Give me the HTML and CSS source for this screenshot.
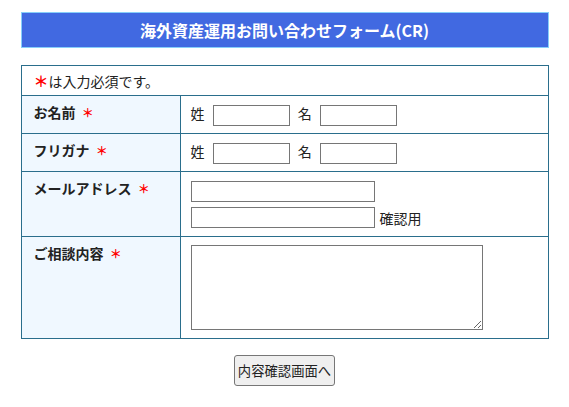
FILE: index.html
```
<!doctype html>
<html lang="ja">
<head>
  <meta charset="utf-8">
  <title>海外資産運用お問い合わせフォーム(CR)</title>
  <link rel="stylesheet" href="styles.css">
</head>
<body>
  <div class="wrap">
    <h1 class="formTitle">海外資産運用お問い合わせフォーム(CR)</h1>

    <table class="formTable">
      <tr>
        <td colspan="2" class="note"><span class="mark">＊</span>は入力必須です。</td>
      </tr>
      <tr>
        <th>お名前 <span class="req">＊</span></th>
        <td>姓 <input type="text" class="short"> 名 <input type="text" class="short"></td>
      </tr>
      <tr>
        <th>フリガナ <span class="req">＊</span></th>
        <td>姓 <input type="text" class="short"> 名 <input type="text" class="short"></td>
      </tr>
      <tr>
        <th>メールアドレス <span class="req">＊</span></th>
        <td class="mail">
          <div class="mailLine"><input type="text" class="long"></div>
          <div class="mailLine"><input type="text" class="long"> 確認用</div>
        </td>
      </tr>
      <tr>
        <th>ご相談内容 <span class="req">＊</span></th>
        <td class="msg"><textarea></textarea></td>
      </tr>
    </table>

    <div class="submitArea">
      <button type="button">内容確認画面へ</button>
    </div>
  </div>
</body>
</html>
```

FILE: styles.css
```
body{
  margin:0;
  font-family:"Noto Sans CJK JP", "Liberation Sans", sans-serif;
  font-size:14px;
  color:#222;
  background:#fff;
}
.wrap{
  width:528px;
  margin:0 auto;
  padding-top:12px;
}
.formTitle{
  margin:0;
  height:36px;
  box-sizing:border-box;
  line-height:34px;
  background:#4169e1;
  border:1px solid #87cefa;
  color:#fff;
  font-size:16px;
  font-weight:bold;
  text-align:center;
}
.formTable{
  width:100%;
  margin-top:17px;
  border-collapse:collapse;
  line-height:20px;
}
.formTable th,
.formTable td{
  border:1px solid #2a6e8c;
}
.formTable th{
  width:134px;
  padding:6px 12px;
  background:#f0f8ff;
  text-align:left;
  vertical-align:top;
  font-weight:bold;
}
.formTable td{
  height:23px;
  padding:7px 10px;
  vertical-align:middle;
}
.formTable td.note{
  height:auto;
  padding:5px 12px 4px;
}
.mark{
  color:#f00;
  font-size:15px;
  font-weight:bold;
}
.req{
  margin-left:3px;
  color:#f00;
  font-size:12px;
  font-weight:bold;
}
input{
  box-sizing:border-box;
  height:21px;
  margin:0 5px;
  padding:1px 2px;
  border:1px solid #767676;
  vertical-align:middle;
  font-family:inherit;
}
.short{
  width:77px;
}
.long{
  width:184px;
  margin:0 5px 0 0;
}
.formTable td.mail{
  padding:9px 10px 8px;
}
.mailLine{
  display:flex;
  align-items:center;
  height:21px;
}
.mailLine + .mailLine{
  margin-top:5px;
}
.formTable td.msg{
  padding:8px 10px;
}
textarea{
  display:block;
  box-sizing:border-box;
  width:292px;
  height:85px;
  margin:0;
  border:1px solid #767676;
}
.submitArea{
  margin-top:16px;
  text-align:center;
}
.submitArea button{
  height:31px;
  padding:0 3px;
  font-family:inherit;
  font-size:13.33px;
  color:#222;
  background:#efefef;
  border:1px solid #767676;
  border-radius:3px;
}
```
